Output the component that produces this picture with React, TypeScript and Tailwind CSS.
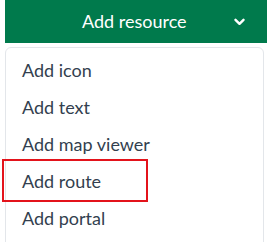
const items = ["Add icon", "Add text", "Add map viewer", "Add route", "Add portal"];

export default function App() {
  return (
    <div className="w-[267px] h-[242px] overflow-hidden bg-white font-['Lato',sans-serif]">
      <div className="ml-[5px] h-[43px] bg-[#007a4c] flex items-center text-white">
        <span className="pl-[77px] text-[18px]">Add resource</span>
        <svg
          className="ml-auto mr-[22px]"
          width="11"
          height="8"
          viewBox="0 0 11 8"
          fill="none"
          stroke="currentColor"
          strokeWidth="2.4"
          strokeLinecap="round"
          strokeLinejoin="round"
        >
          <path d="M1.5 1.8 L5.5 5.8 L9.5 1.8" />
        </svg>
      </div>

      <div className="mt-[4px] ml-[5px] mr-[3px] h-[220px] border border-[#e3e6ea] rounded-md py-[3px]">
        {items.map((label) => (
          <div
            key={label}
            className="relative h-[37px] flex items-center pl-[16px] text-[18px] leading-none text-[#333f4f]"
          >
            {label}
            {label === "Add route" && (
              <div className="absolute left-[-4px] top-[-3px] w-[146px] h-[43px] border-2 border-[#e3131b]" />
            )}
          </div>
        ))}
      </div>
    </div>
  );
}
